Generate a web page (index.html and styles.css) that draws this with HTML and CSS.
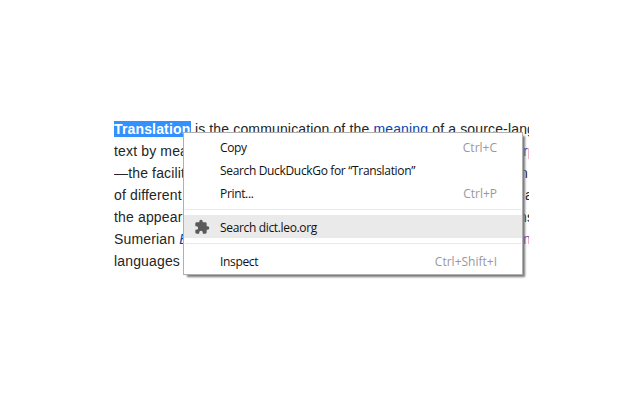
FILE: index.html
```html
<!DOCTYPE html>
<html lang="en">
<head>
<meta charset="utf-8">
<title>Translation</title>
<link rel="stylesheet" href="styles.css">
</head>
<body>
<main class="article">
  <p class="line"><span><b class="selected">Translation</b> is the communication of the <a>meaning</a> of a source-lang</span></p>
  <p class="line"><span>text by mea</span><span class="tail"><a>r</a><a class="visited">p</a></span></p>
  <p class="line"><span>—the facilit</span><span class="tail tail-n">n</span></p>
  <p class="line"><span>of different</span><span class="tail tail-a">a</span></p>
  <p class="line"><span>the appear</span><span class="tail tail-ns">ns</span></p>
  <p class="line"><span>Sumerian <a><i>E</i></a></span><span class="tail"><a class="visited">n</a></span></p>
  <p class="line"><span>languages</span></p>
</main>
<div class="menu">
  <div class="item"><span class="label">Copy</span><span class="key">Ctrl+C</span></div>
  <div class="item"><span class="label">Search DuckDuckGo for “Translation”</span></div>
  <div class="item"><span class="label">Print...</span><span class="key">Ctrl+P</span></div>
  <div class="separator"></div>
  <div class="item lower active">
    <svg class="icon" viewBox="0 0 24 24"><path d="M20.500 11H19V7c0-1.100-.9-2-2-2h-4V3.500a2.500 2.500 0 0 0-5 0V5H4c-1.100 0-2 .9-2 2v3.800h1.500a2.700 2.700 0 0 1 0 5.400H2V20c0 1.100.9 2 2 2h3.800v-1.500a2.700 2.700 0 0 1 5.400 0V22H17c1.100 0 2-.9 2-2v-4h1.500a2.500 2.500 0 0 0 0-5z"/></svg>
    <span class="label">Search dict.leo.org</span>
  </div>
  <div class="separator after-active"></div>
  <div class="item lower"><span class="label">Inspect</span><span class="key">Ctrl+Shift+I</span></div>
</div>
</body>
</html>
```
FILE: styles.css
```css
body {
  margin: 0;
  width: 640px;
  height: 400px;
  background: #fff;
  overflow: hidden;
}
.article {
  width: 415px;
  margin: 118px 0 0 114px;
  overflow: hidden;
  color: #252525;
  font: 14px/22px "Liberation Sans", Arial, sans-serif;
  letter-spacing: 0.15px;
}
.line {
  display: flex;
  margin: 0;
  height: 22px;
  white-space: nowrap;
}
.selected {
  display: inline-block;
  height: 16px;
  padding-right: 0.5px;
  line-height: 16px;
  background: #3390ff;
  color: #fff;
}
.article a { color: #0645ad; }
.article a.visited { color: #7a35b0; }
.tail {
  width: 6px;
  margin-left: auto;
}
.tail-n { width: 9px; }
.tail-a { width: 4px; }
.tail-ns { width: 10px; }
.menu {
  position: absolute;
  left: 183px;
  top: 132px;
  box-sizing: border-box;
  width: 340px;
  height: 143px;
  padding: 3px 0;
  border: 1px solid #b0b0b0;
  background: #fff;
  box-shadow: 3px 3px 2px -1px #777;
  color: #111;
  font: 12px/23px "Open Sans", "Noto Sans", sans-serif;
}
.item {
  position: relative;
  display: flex;
  justify-content: space-between;
  height: 23px;
  padding: 0 25px 0 36px;
  white-space: nowrap;
}
.lower { line-height: 25px; }
.label { letter-spacing: -0.34px; }
.active { background: #eaeaea; }
.key { color: #999; }
.separator {
  height: 1px;
  margin: 4px 1px 5px;
  background: #e9e9e9;
}
.after-active { margin: 5px 1px; }
.icon {
  position: absolute;
  left: 10px;
  top: 4px;
  width: 16px;
  height: 16px;
  fill: #5a5a5a;
}
```
